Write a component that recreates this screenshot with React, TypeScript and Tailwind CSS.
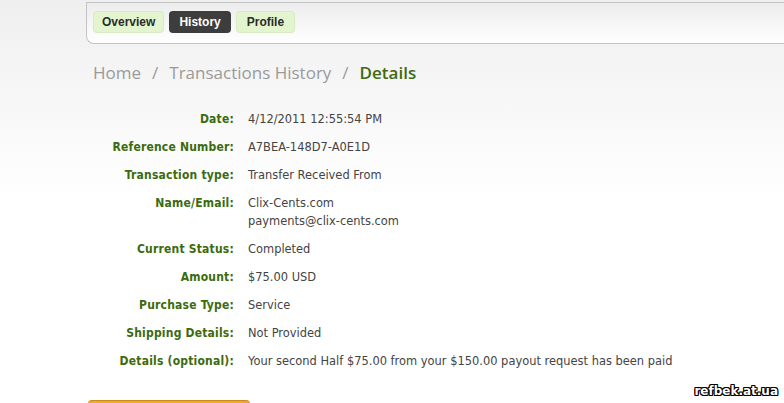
import React from 'react';

const rows: { label: string; value: string[] }[] = [
    { label: 'Date:', value: ['4/12/2011 12:55:54 PM'] },
    { label: 'Reference Number:', value: ['A7BEA-148D7-A0E1D'] },
    { label: 'Transaction type:', value: ['Transfer Received From'] },
    { label: 'Name/Email:', value: ['Clix-Cents.com', 'payments@clix-cents.com'] },
    { label: 'Current Status:', value: ['Completed'] },
    { label: 'Amount:', value: ['$75.00 USD'] },
    { label: 'Purchase Type:', value: ['Service'] },
    { label: 'Shipping Details:', value: ['Not Provided'] },
    { label: 'Details (optional):', value: ['Your second Half $75.00 from your $150.00 payout request has been paid'] },
];

export default function App() {
    return (
        <div className="relative w-[784px] h-[403px] overflow-hidden bg-gradient-to-b from-[#efefef] via-white to-white font-['DejaVu_Sans',sans-serif]">
            <div className="pt-[2px]">
                <div className="ml-[86px] h-[42px] border-t border-l border-b border-[#c4c4c4] rounded-bl-[8px] bg-gradient-to-b from-[#ececec] to-white flex items-start gap-[5px] pl-[6px] pt-[8px]">
                    <span className="h-[22px] px-[8px] flex items-center rounded-[4px] bg-[#e3f5cf] border border-[#d6ebc1] text-[12px] font-bold text-[#2b2b2b] font-['Liberation_Sans',sans-serif]">Overview</span>
                    <span className="h-[22px] px-[10px] flex items-center rounded-[4px] bg-[#3d3d3d] text-[12px] font-bold text-white font-['Liberation_Sans',sans-serif]">History</span>
                    <span className="h-[22px] px-[10px] flex items-center rounded-[4px] bg-[#e3f5cf] border border-[#d6ebc1] text-[12px] font-bold text-[#2b2b2b] font-['Liberation_Sans',sans-serif]">Profile</span>
                </div>
            </div>

            <div className="ml-[93px] mt-[17px] text-[17px] font-['Open_Sans',sans-serif] text-[#9a9a9a] flex gap-[11px] leading-[24px]">
                <span>Home</span>
                <span>/</span>
                <span>Transactions History</span>
                <span>/</span>
                <span className="text-[#3f6a0f] font-semibold">Details</span>
            </div>

            <div className="mt-[25px] flex flex-col">
                {rows.map((r) => (
                    <div key={r.label} className="flex leading-[18px] pb-[10px]">
                        <div className="w-[236px] pr-[2px] text-right text-[12px] font-bold text-[#3c6b0e] font-['DejaVu_Sans_Condensed',sans-serif] tracking-[0.2px]">
                            {r.label}
                        </div>
                        <div className="ml-[12px] text-[11.45px] text-[#444]">
                            {r.value.map((v) => (
                                <div key={v}>{v}</div>
                            ))}
                        </div>
                    </div>
                ))}
            </div>

            <div className="absolute left-[88px] top-[400px] w-[162px] h-[6px] rounded-t-[4px] bg-[#f0a830] border-t border-[#c98a1e]" />

            <div className="absolute right-[6px] top-[382px] text-[12px] font-bold text-white font-['DejaVu_Sans',sans-serif] [text-shadow:1px_0_0_#000,-1px_0_0_#000,0_1px_0_#000,0_-1px_0_#000,1px_1px_0_#000,-1px_-1px_0_#000,1px_-1px_0_#000,-1px_1px_0_#000]">
                refbek.at.ua
            </div>
        </div>
    );
}
